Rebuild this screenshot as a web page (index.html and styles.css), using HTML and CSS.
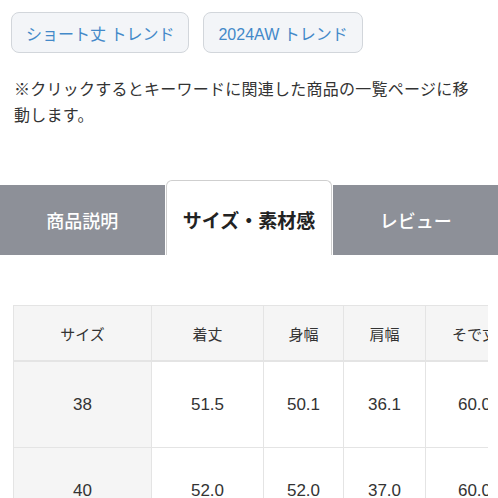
FILE: index.html
```html
<!DOCTYPE html>
<html lang="ja">
<head>
<meta charset="utf-8">
<link rel="stylesheet" href="styles.css">
</head>
<body>
<div class="page">
  <div class="tags">
    <a class="tag">ショート丈 トレンド</a>
    <a class="tag">2024AW トレンド</a>
  </div>
  <p class="note">※クリックするとキーワードに関連した商品の一覧ページに移動します。</p>
  <div class="tabs">
    <div class="tab">商品説明</div>
    <div class="tab active">サイズ・素材感</div>
    <div class="tab">レビュー</div>
  </div>
  <div class="table-wrap">
    <table class="size">
      <colgroup>
        <col class="c1"><col class="c2"><col class="c3"><col class="c4"><col class="c5">
      </colgroup>
      <thead>
        <tr><th>サイズ</th><th>着丈</th><th>身幅</th><th>肩幅</th><th>そで丈</th></tr>
      </thead>
      <tbody>
        <tr><td class="label">38</td><td>51.5</td><td>50.1</td><td>36.1</td><td>60.0</td></tr>
        <tr><td class="label">40</td><td>52.0</td><td>52.0</td><td>37.0</td><td>60.0</td></tr>
      </tbody>
    </table>
  </div>
</div>
</body>
</html>
```
FILE: styles.css
```css
html, body {
  margin: 0;
  padding: 0;
  background: #ffffff;
}
body {
  font-family: "Liberation Sans", "Noto Sans CJK JP", sans-serif;
  color: #333333;
  width: 498px;
  overflow: hidden;
}
.page {
  padding-top: 12px;
}
.tags {
  display: flex;
  gap: 14px;
  padding-left: 11px;
}
.tag {
  display: flex;
  align-items: center;
  height: 39px;
  padding: 0 14px;
  border: 1px solid #d2d6db;
  border-radius: 8px;
  background: #f3f5f8;
  color: #4389c9;
  font-size: 16px;
  white-space: nowrap;
}
.note {
  margin: 24px 0 0 0;
  padding: 0 14px;
  font-size: 16px;
  line-height: 26px;
  letter-spacing: 0.25px;
  color: #333333;
}
.tabs {
  display: flex;
  align-items: flex-end;
  gap: 1px;
  margin-top: 51px;
  height: 75px;
}
.tab {
  flex: 1;
  height: 70px;
  display: flex;
  align-items: center;
  justify-content: center;
  background: #8d9098;
  color: #ffffff;
  font-size: 18px;
  font-weight: 500;
  box-sizing: border-box;
}
.tab.active {
  height: 75px;
  background: #ffffff;
  color: #222222;
  font-size: 19px;
  font-weight: 700;
  border: 1px solid #cfcfcf;
  border-bottom: none;
  border-radius: 6px 6px 0 0;
  padding-top: 2px;
}
.table-wrap {
  margin: 50px 10px 0 13px;
  overflow: hidden;
}
.size {
  border-collapse: collapse;
  table-layout: fixed;
  width: 510px;
}
.size th, .size td {
  border: 1px solid #e4e4e4;
  text-align: center;
  color: #333333;
  font-weight: normal;
  white-space: nowrap;
  overflow: hidden;
  padding: 0;
}
.size th {
  height: 54px;
  font-size: 15px;
  background: #f5f5f5;
  border-bottom: 2px solid #e4e4e4;
}
.size td {
  height: 85px;
  font-size: 17px;
  background: #ffffff;
}
.size td.label {
  background: #f5f5f5;
}
.c1 { width: 138px; }
.c2 { width: 112px; }
.c3 { width: 80px; }
.c4 { width: 82px; }
.c5 { width: 98px; }
```
